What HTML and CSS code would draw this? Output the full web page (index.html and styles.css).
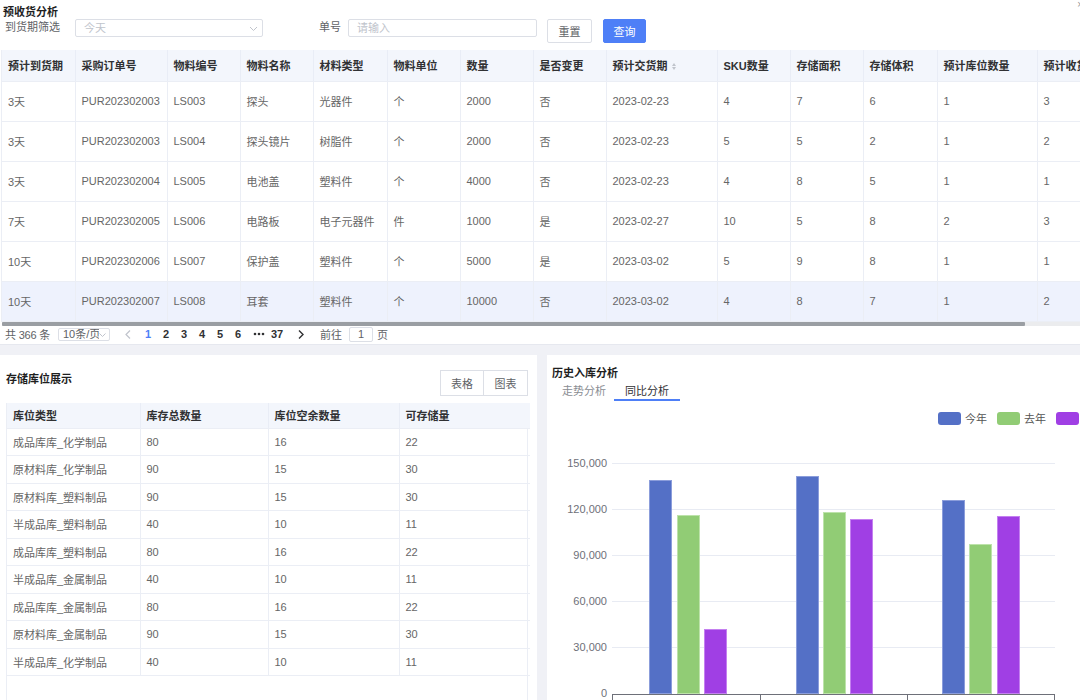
FILE: index.html
```html
<!DOCTYPE html>
<html lang="zh-CN">
<head>
<meta charset="utf-8">
<title>预收货分析</title>
<link rel="stylesheet" href="styles.css">
</head>
<body>
<section class="top">
  <span class="close">×</span>
  <div class="title">预收货分析</div>
  <div class="filters">
    <span class="lbl lbl-date">到货期筛选</span>
    <div class="select">
      <span class="ph">今天</span>
      <svg class="chev" width="9" height="6" viewBox="0 0 9 6"><polyline points="1,1 4.5,4.5 8,1" fill="none" stroke="#c0c4cc" stroke-width="1"/></svg>
    </div>
    <span class="lbl lbl-no">单号</span>
    <div class="input"><span class="ph">请输入</span></div>
    <button class="btn btn-reset">重置</button>
    <button class="btn btn-primary">查询</button>
  </div>

  <div class="tbl-wrap">
    <table class="grid">
      <colgroup>
        <col style="width:73px"><col style="width:92px"><col style="width:73px"><col style="width:73px"><col style="width:74px"><col style="width:73px"><col style="width:73px"><col style="width:73px"><col style="width:111px"><col style="width:73px"><col style="width:73px"><col style="width:74px"><col style="width:100px"><col style="width:100px">
      </colgroup>
      <thead>
        <tr><th>预计到货期</th><th>采购订单号</th><th>物料编号</th><th>物料名称</th><th>材料类型</th><th>物料单位</th><th>数量</th><th>是否变更</th><th>预计交货期<span class="sort"><i class="up"></i><i class="dn"></i></span></th><th>SKU数量</th><th>存储面积</th><th>存储体积</th><th>预计库位数量</th><th>预计收货时长</th></tr>
      </thead>
      <tbody>
        <tr><td>3天</td><td>PUR202302003</td><td>LS003</td><td>探头</td><td>光器件</td><td>个</td><td>2000</td><td>否</td><td>2023-02-23</td><td>4</td><td>7</td><td>6</td><td>1</td><td>3</td></tr>
        <tr><td>3天</td><td>PUR202302003</td><td>LS004</td><td>探头镜片</td><td>树脂件</td><td>个</td><td>2000</td><td>否</td><td>2023-02-23</td><td>5</td><td>5</td><td>2</td><td>1</td><td>2</td></tr>
        <tr><td>3天</td><td>PUR202302004</td><td>LS005</td><td>电池盖</td><td>塑料件</td><td>个</td><td>4000</td><td>否</td><td>2023-02-23</td><td>4</td><td>8</td><td>5</td><td>1</td><td>1</td></tr>
        <tr><td>7天</td><td>PUR202302005</td><td>LS006</td><td>电路板</td><td>电子元器件</td><td>件</td><td>1000</td><td>是</td><td>2023-02-27</td><td>10</td><td>5</td><td>8</td><td>2</td><td>3</td></tr>
        <tr><td>10天</td><td>PUR202302006</td><td>LS007</td><td>保护盖</td><td>塑料件</td><td>个</td><td>5000</td><td>是</td><td>2023-03-02</td><td>5</td><td>9</td><td>8</td><td>1</td><td>1</td></tr>
        <tr class="hover"><td>10天</td><td>PUR202302007</td><td>LS008</td><td>耳套</td><td>塑料件</td><td>个</td><td>10000</td><td>否</td><td>2023-03-02</td><td>4</td><td>8</td><td>7</td><td>1</td><td>2</td></tr>
      </tbody>
    </table>
  </div>
  <div class="hscroll"><div class="thumb"></div></div>

  <div class="pager">
    <span class="total">共 366 条</span>
    <div class="sizes"><span class="sz-txt">10条/页</span><svg class="chev-s" width="7" height="5" viewBox="0 0 7 5"><polyline points="0.5,0.5 3.5,3.5 6.5,0.5" fill="none" stroke="#c0c4cc" stroke-width="1"/></svg></div>
    <svg class="prev" width="6" height="9" viewBox="0 0 6 9"><polyline points="5,0.5 1,4.5 5,8.5" fill="none" stroke="#c0c4cc" stroke-width="1.2"/></svg>
    <ul class="pages">
      <li class="on">1</li><li>2</li><li>3</li><li>4</li><li>5</li><li>6</li><li class="more"><svg width="12" height="4" viewBox="0 0 12 4"><circle cx="2" cy="2" r="1.3" fill="#303133"/><circle cx="6" cy="2" r="1.3" fill="#303133"/><circle cx="10" cy="2" r="1.3" fill="#303133"/></svg></li><li>37</li>
    </ul>
    <svg class="next" width="6" height="9" viewBox="0 0 6 9"><polyline points="1,0.5 5,4.5 1,8.5" fill="none" stroke="#303133" stroke-width="1.4"/></svg>
    <span class="goto">前往</span>
    <div class="jump">1</div>
    <span class="page-u">页</span>
  </div>
</section>

<div class="bottom">
  <section class="panel left">
    <div class="phead">
      <div class="ptitle">存储库位展示</div>
      <div class="btn-group"><button class="gbtn">表格</button><button class="gbtn">图表</button></div>
    </div>
    <div class="stbl">
      <table class="grid small">
        <colgroup><col style="width:133px"><col style="width:128px"><col style="width:131px"><col style="width:131px"></colgroup>
        <thead><tr><th>库位类型</th><th>库存总数量</th><th>库位空余数量</th><th>可存储量</th></tr></thead>
        <tbody>
          <tr><td>成品库库_化学制品</td><td>80</td><td>16</td><td>22</td></tr>
          <tr><td>原材料库_化学制品</td><td>90</td><td>15</td><td>30</td></tr>
          <tr><td>原材料库_塑料制品</td><td>90</td><td>15</td><td>30</td></tr>
          <tr><td>半成品库_塑料制品</td><td>40</td><td>10</td><td>11</td></tr>
          <tr><td>成品库库_塑料制品</td><td>80</td><td>16</td><td>22</td></tr>
          <tr><td>半成品库_金属制品</td><td>40</td><td>10</td><td>11</td></tr>
          <tr><td>成品库库_金属制品</td><td>80</td><td>16</td><td>22</td></tr>
          <tr><td>原材料库_金属制品</td><td>90</td><td>15</td><td>30</td></tr>
          <tr><td>半成品库_化学制品</td><td>40</td><td>10</td><td>11</td></tr>
        </tbody>
      </table>
    </div>
  </section>

  <section class="panel right">
    <div class="ptitle rtitle">历史入库分析</div>
    <div class="tabs"><span class="tab">走势分析</span><span class="tab active">同比分析</span></div>
    <svg class="chart" width="533" height="300" viewBox="0 0 533 300">
      <g class="legend">
        <rect x="391" y="7" width="23" height="13" rx="3" fill="#5470c6"/>
        <text x="418" y="17.5">今年</text>
        <rect x="450" y="7" width="23" height="13" rx="3" fill="#91cc75"/>
        <text x="477" y="17.5">去年</text>
        <rect x="509" y="7" width="23" height="13" rx="3" fill="#a03fe4"/>
        <text x="536" y="17.5">前年</text>
      </g>
      <g stroke="#e8ebf3" stroke-width="1">
        <line x1="65" y1="58.5" x2="508" y2="58.5"/>
        <line x1="65" y1="104.5" x2="508" y2="104.5"/>
        <line x1="65" y1="150.5" x2="508" y2="150.5"/>
        <line x1="65" y1="196.5" x2="508" y2="196.5"/>
        <line x1="65" y1="242.5" x2="508" y2="242.5"/>
      </g>
      <g class="ylab" text-anchor="end">
        <text x="60" y="62">150,000</text>
        <text x="60" y="108">120,000</text>
        <text x="60" y="154">90,000</text>
        <text x="60" y="200">60,000</text>
        <text x="60" y="246">30,000</text>
        <text x="60" y="292">0</text>
      </g>
      <g stroke-width="1">
        <rect x="102.5" y="75.5" width="22" height="213" fill="#5470c6" stroke="#8b9ddb"/>
        <rect x="130.5" y="110.5" width="22" height="178" fill="#91cc75" stroke="#bde3aa"/>
        <rect x="157.5" y="224.5" width="22" height="64" fill="#a03fe4" stroke="#c480f0"/>
        <rect x="249.5" y="71.5" width="22" height="217" fill="#5470c6" stroke="#8b9ddb"/>
        <rect x="276.5" y="107.5" width="22" height="181" fill="#91cc75" stroke="#bde3aa"/>
        <rect x="303.5" y="114.5" width="22" height="174" fill="#a03fe4" stroke="#c480f0"/>
        <rect x="395.5" y="95.5" width="22" height="193" fill="#5470c6" stroke="#8b9ddb"/>
        <rect x="422.5" y="139.5" width="22" height="149" fill="#91cc75" stroke="#bde3aa"/>
        <rect x="450.5" y="111.5" width="22" height="177" fill="#a03fe4" stroke="#c480f0"/>
      </g>
      <g stroke="#6e7079" stroke-width="1">
        <line x1="65" y1="289.5" x2="508" y2="289.5"/>
        <line x1="65.5" y1="289" x2="65.5" y2="295"/>
        <line x1="213.5" y1="289" x2="213.5" y2="295"/>
        <line x1="360.5" y1="289" x2="360.5" y2="295"/>
        <line x1="507.5" y1="289" x2="507.5" y2="295"/>
      </g>
    </svg>
  </section>
</div>
</body>
</html>
```

FILE: styles.css
```css
* { box-sizing: border-box; }

body {
  margin: 0;
  background: #f0f1f6;
  font-family: "Liberation Sans", "Noto Sans CJK SC", sans-serif;
  font-size: 11px;
  color: #606266;
  overflow: hidden;
  height: 700px;
}

.top {
  position: relative;
  background: #fff;
  height: 345px;
  border-bottom: 1px solid #e6e8ef;
  padding-top: 5px;
  overflow: hidden;
}

.close {
  position: absolute;
  top: 0;
  right: -3px;
  font-size: 10px;
  line-height: 10px;
  color: #909399;
}

.title {
  padding-left: 3px;
  font-weight: bold;
  color: #1f1f1f;
  line-height: 14px;
  height: 14px;
}

.filters {
  display: flex;
  align-items: flex-start;
  height: 24px;
}

.lbl {
  line-height: 16px;
  color: #606266;
}
.lbl-date { margin-left: 5px; width: 70px; }
.lbl-no { margin-left: 56px; width: 29px; }

.select, .input {
  height: 18px;
  border: 1px solid #dcdfe6;
  border-radius: 2px;
  display: flex;
  align-items: center;
  padding-left: 8px;
  position: relative;
}
.select { width: 188px; }
.input { width: 189px; }
.ph { color: #c0c4cc; line-height: 16px; }
.chev { position: absolute; right: 4px; top: 6px; }

.btn {
  height: 24px;
  border-radius: 2px;
  font-family: inherit;
  font-size: 11px;
  padding: 0;
  cursor: pointer;
}
.btn-reset {
  margin-left: 10px;
  width: 45px;
  background: #fff;
  border: 1px solid #dcdfe6;
  color: #606266;
}
.btn-primary {
  margin-left: 11px;
  width: 43px;
  background: #4e7ff7;
  border: 1px solid #4e7ff7;
  color: #fff;
}

.tbl-wrap {
  margin-top: 7px;
  margin-left: 1px;
  overflow: hidden;
  border-left: 1px solid #ebeef5;
}

.grid {
  border-collapse: collapse;
  table-layout: fixed;
  width: 1135px;
}
.grid th, .grid td {
  text-align: left;
  padding: 0 0 0 6px;
  white-space: nowrap;
  overflow: hidden;
  border-right: 1px solid #ebeef5;
  border-bottom: 1px solid #ebeef5;
}
.grid th {
  height: 31px;
  background: #f3f6fc;
  color: #303133;
  font-weight: bold;
  border-right-color: #e9edf6;
}
.grid td {
  height: 40px;
  color: #666;
}
.grid tr.hover td { background: #eef2fd; }

.sort {
  display: inline-flex;
  flex-direction: column;
  gap: 1px;
  margin-left: 4px;
  vertical-align: middle;
  position: relative;
  top: -1px;
}
.sort i {
  width: 0; height: 0;
  border-left: 2.5px solid transparent;
  border-right: 2.5px solid transparent;
}
.sort .up { border-bottom: 3px solid #c0c4cc; }
.sort .dn { border-top: 3px solid #c0c4cc; }

.hscroll {
  height: 4px;
  background: #ebecee;
  margin-left: 2px;
}
.thumb {
  width: 1023px;
  height: 4px;
  background: #9a9ea3;
  border-radius: 1px;
}

.pager {
  display: flex;
  align-items: center;
  height: 17px;
  padding-left: 5px;
  color: #606266;
  white-space: nowrap;
}
.total { width: 45px; white-space: nowrap; letter-spacing: -0.2px; }
.sizes {
  margin-left: 8px;
  width: 52px;
  height: 13px;
  border: 1px solid #dcdfe6;
  border-radius: 2px;
  display: flex;
  align-items: center;
  padding-left: 4px;
  overflow: hidden;
  position: relative;
}
.sz-txt { line-height: 11px; white-space: nowrap; width: 36px; overflow: hidden; }
.chev-s { position: absolute; right: 3px; top: 4px; }
.prev { margin-left: 15px; }
.pages {
  display: flex;
  align-items: center;
  list-style: none;
  margin: 0 0 0 14px;
  padding: 0;
}
.pages li {
  font-weight: bold;
  color: #303133;
  width: 18px;
}
.pages li.on { color: #4e7ff7; }
.pages li.more { width: 18px; display: flex; align-items: center; }
.pages li:last-child { width: 20px; }
.next { margin-left: 7px; }
.goto { margin-left: 16px; }
.jump {
  margin-left: 7px;
  width: 24px;
  height: 15px;
  border: 1px solid #dcdfe6;
  border-radius: 2px;
  text-align: center;
  line-height: 13px;
}
.page-u { margin-left: 4px; }

.bottom {
  display: flex;
  gap: 10px;
  margin-top: 10px;
  height: 345px;
}
.panel {
  background: #fff;
  height: 360px;
  overflow: hidden;
}
.left { width: 537px; padding: 15px 9px 0 6px; }
.right { flex: 1; padding: 11px 0 0 5px; }

.phead {
  display: flex;
  justify-content: space-between;
  align-items: flex-start;
  height: 26px;
}
.ptitle {
  font-weight: bold;
  color: #1f1f1f;
  line-height: 18px;
}
.btn-group { display: flex; }
.gbtn {
  width: 44px;
  height: 26px;
  background: #fff;
  border: 1px solid #dcdfe6;
  font-family: inherit;
  font-size: 11px;
  color: #606266;
  padding: 0;
}
.gbtn + .gbtn { margin-left: -1px; width: 45px; }

.stbl {
  margin-top: 7px;
  height: 400px;
  border: 1px solid #ebeef5;
  border-top: 0;
}
.grid.small { width: 521px; }
.grid.small th { height: 25px; }
.grid.small td { height: 27.5px; }
.grid.small th:last-child, .grid.small td:last-child { border-right: 0; }

.rtitle { line-height: 14px; }
.tabs {
  display: flex;
  margin-top: 3px;
  margin-left: 10px;
}
.tab {
  line-height: 16px;
  color: #8a8d93;
  border-bottom: 2px solid transparent;
}
.tab.active {
  margin-left: 8px;
  padding: 0 11px;
  color: #303133;
  border-bottom-color: #4e7ff7;
}

.chart {
  display: block;
  margin-top: 4px;
  margin-left: -5px;
  overflow: visible;
}
.chart text {
  font-family: "Liberation Sans", "Noto Sans CJK SC", sans-serif;
  font-size: 11px;
  fill: #6e7079;
}
.legend text { fill: #555; font-size: 11px; }
```
